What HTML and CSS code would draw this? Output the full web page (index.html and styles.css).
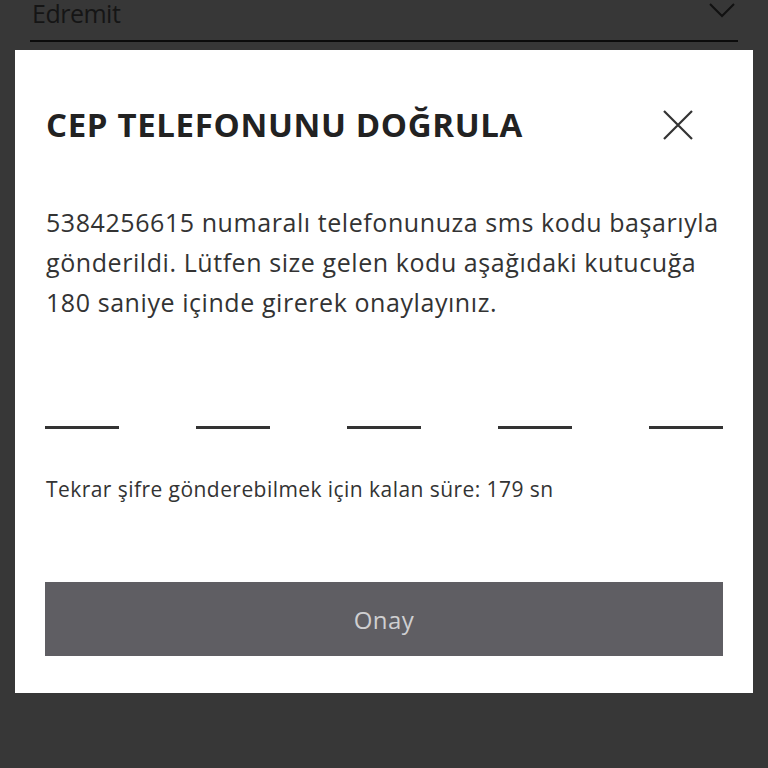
FILE: index.html
```html
<!DOCTYPE html>
<html lang="tr">
<head>
<meta charset="utf-8">
<title>Cep Telefonunu Doğrula</title>
<link rel="stylesheet" href="styles.css">
</head>
<body>
  <div class="field">
    <span class="field-value">Edremit</span>
    <svg class="field-chevron" width="28" height="16" viewBox="0 0 28 16" aria-hidden="true">
      <path d="M2 2 L14 14 L26 2" fill="none" stroke="#111" stroke-width="2"/>
    </svg>
  </div>

  <section class="modal">
    <header class="modal-head">
      <h1 class="modal-title">CEP TELEFONUNU DOĞRULA</h1>
      <button class="modal-close" type="button" aria-label="Kapat">
        <svg width="30" height="30" viewBox="0 0 30 30" aria-hidden="true">
          <path d="M1 1 L29 29 M29 1 L1 29" fill="none" stroke="#333" stroke-width="2.2"/>
        </svg>
      </button>
    </header>

    <p class="modal-text">5384256615 numaralı telefonunuza sms kodu başarıyla<br>gönderildi. Lütfen size gelen kodu aşağıdaki kutucuğa<br>180 saniye içinde girerek onaylayınız.</p>

    <div class="code-inputs">
      <span class="code-slot"></span>
      <span class="code-slot"></span>
      <span class="code-slot"></span>
      <span class="code-slot"></span>
      <span class="code-slot"></span>
    </div>

    <p class="resend">Tekrar şifre gönderebilmek için kalan süre: 179 sn</p>

    <button class="confirm" type="button">Onay</button>
  </section>
</body>
</html>
```

FILE: styles.css
```css
* { box-sizing: border-box; }

html, body {
  margin: 0;
  height: 100%;
}

body {
  background: #373737;
  font-family: "Open Sans", "Lato", sans-serif;
  color: #333;
  overflow: hidden;
}

/* select field behind the dialog */
.field {
  margin: -14px 30px 0;
  height: 56px;
  display: flex;
  align-items: center;
  justify-content: space-between;
  padding: 0 2px;
  border-bottom: 2px solid #0b0b0b;
}

.field-value {
  font-size: 25px;
  color: #151515;
  font-weight: 400;
  letter-spacing: -0.5px;
}

.field-chevron {
  margin-top: -6px;
}

/* dialog */
.modal {
  margin: 8px 15px 0;
  background: #fff;
  padding: 55px 30px 37px 30px;
}

.modal-head {
  display: flex;
  align-items: center;
  justify-content: space-between;
  padding-left: 1px;
  padding-right: 30px;
}

.modal-title {
  margin: 0;
  font-size: 33px;
  font-weight: 700;
  color: #222;
  letter-spacing: 0.65px;
  line-height: 40px;
}

.modal-close {
  border: 0;
  background: none;
  padding: 0;
  width: 30px;
  height: 30px;
  display: block;
}

.modal-close svg { display: block; }

.modal-text {
  margin: 57px 0 0 1px;
  font-size: 25px;
  line-height: 40px;
  letter-spacing: 0.57px;
  color: #333;
  white-space: nowrap;
}

.code-inputs {
  margin-top: 104px;
  display: flex;
  justify-content: space-between;
}

.code-slot {
  width: 74px;
  height: 3px;
  background: #333;
}

.resend {
  margin: 46px 0 0 1px;
  font-size: 21px;
  letter-spacing: 0.44px;
  color: #333;
}

.confirm {
  margin-top: 79px;
  width: 100%;
  height: 74px;
  border: 0;
  background: #5f5e63;
  color: #cfcfd1;
  font-family: inherit;
  font-size: 24px;
  letter-spacing: 0.5px;
  display: block;
}
```
